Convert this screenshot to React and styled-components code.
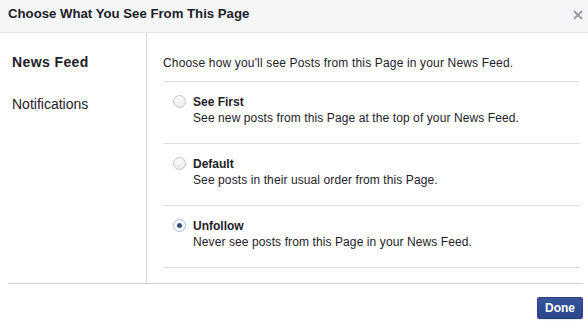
import React, { useState } from "react";
import styled, { createGlobalStyle } from "styled-components";

const Global = createGlobalStyle`
  html, body { margin: 0; padding: 0; background: #fff; }
  body { font-family: "Liberation Sans", Arial, sans-serif; color: #1d2129; }
  * { box-sizing: border-box; }
`;

const Dialog = styled.div`
  width: 588px;
  height: 330px;
  background: #fff;
  display: flex;
  flex-direction: column;
`;

const Header = styled.div`
  height: 33px;
  background: #f5f6f7;
  border-bottom: 1px solid #e5e5e5;
  display: flex;
  justify-content: space-between;
  align-items: flex-start;
  padding: 5px 5px 0 8px;
`;

const Title = styled.h1`
  margin: 0;
  font-size: 13.2px;
  line-height: 18px;
  font-weight: bold;
  color: #1d2129;
`;

const Close = styled.button`
  border: 0;
  background: none;
  padding: 0;
  margin-top: 5px;
  width: 10px;
  height: 10px;
  display: flex;
  cursor: pointer;
`;

const Body = styled.div`
  display: flex;
  height: 250px;
`;

const Sidebar = styled.nav`
  width: 147px;
  border-right: 1px solid #d3d6db;
  padding: 20px 0 0 12px;
  display: flex;
  flex-direction: column;
  gap: 24px;
`;

const NavItem = styled.div`
  font-size: 14px;
  line-height: 18px;
  font-weight: ${(p) => (p.$active ? "bold" : "normal")};
  letter-spacing: ${(p) => (p.$active ? "0.4px" : "0")};
  color: #1d2129;
`;

const Main = styled.div`
  flex: 1;
  padding: 22px 8px 0 16px;
`;

const Intro = styled.div`
  font-size: 12px;
  line-height: 16px;
  letter-spacing: 0.16px;
  padding-bottom: 10px;
  border-bottom: 1px solid #dddfe2;
`;

const Option = styled.label`
  display: flex;
  align-items: flex-start;
  gap: 7px;
  padding: 12px 0 17px 10px;
  border-bottom: 1px solid #dddfe2;
  cursor: pointer;
`;

const Radio = styled.span`
  width: 13px;
  height: 13px;
  margin-top: 1px;
  border-radius: 50%;
  flex: none;
  display: flex;
  align-items: center;
  justify-content: center;
  border: 1px solid ${(p) => (p.$checked ? "#a9bde6" : "#c4c6ca")};
  background: ${(p) =>
    p.$checked
      ? "radial-gradient(circle, #fff 60%, #e8eefb 100%)"
      : "linear-gradient(#fdfdfd, #e9eaec)"};
  &::after {
    content: "";
    display: ${(p) => (p.$checked ? "block" : "none")};
    width: 5px;
    height: 5px;
    border-radius: 50%;
    background: #3b4f74;
  }
`;

const OptText = styled.div`
  display: flex;
  flex-direction: column;
`;

const OptTitle = styled.div`
  font-size: 12px;
  line-height: 16px;
  font-weight: bold;
`;

const OptDesc = styled.div`
  font-size: 12px;
  line-height: 16px;
  letter-spacing: 0.1px;
`;

const Footer = styled.div`
  margin: 0 5px 0 8px;
  border-top: 1px solid #d0d0d0;
  padding-top: 13px;
  display: flex;
  justify-content: flex-end;
`;

const DoneButton = styled.button`
  width: 46px;
  height: 22px;
  border: 1px solid #29447e;
  border-radius: 2px;
  background: linear-gradient(#36559a, #2b468a);
  color: #fff;
  font-family: "Liberation Sans", Arial, sans-serif;
  font-weight: bold;
  font-size: 12px;
  padding: 0;
  box-shadow: 0 1px 1px rgba(0, 0, 0, 0.1);
  cursor: pointer;
`;

const options = [
  { id: "first", title: "See First", desc: "See new posts from this Page at the top of your News Feed." },
  { id: "default", title: "Default", desc: "See posts in their usual order from this Page." },
  { id: "unfollow", title: "Unfollow", desc: "Never see posts from this Page in your News Feed." },
];

export default function App() {
  const [sel, setSel] = useState("unfollow");
  return (
    <>
      <Global />
      <Dialog>
        <Header>
          <Title>Choose What You See From This Page</Title>
          <Close aria-label="Close">
            <svg width="10" height="10" viewBox="0 0 10 10">
              <path d="M1 1 L9 9 M9 1 L1 9" stroke="#9a9ea6" strokeWidth="2" />
            </svg>
          </Close>
        </Header>
        <Body>
          <Sidebar>
            <NavItem $active>News Feed</NavItem>
            <NavItem>Notifications</NavItem>
          </Sidebar>
          <Main>
            <Intro>Choose how you'll see Posts from this Page in your News Feed.</Intro>
            {options.map((o) => (
              <Option key={o.id} onClick={() => setSel(o.id)}>
                <Radio $checked={sel === o.id} />
                <OptText>
                  <OptTitle>{o.title}</OptTitle>
                  <OptDesc>{o.desc}</OptDesc>
                </OptText>
              </Option>
            ))}
          </Main>
        </Body>
        <Footer>
          <DoneButton>Done</DoneButton>
        </Footer>
      </Dialog>
    </>
  );
}
